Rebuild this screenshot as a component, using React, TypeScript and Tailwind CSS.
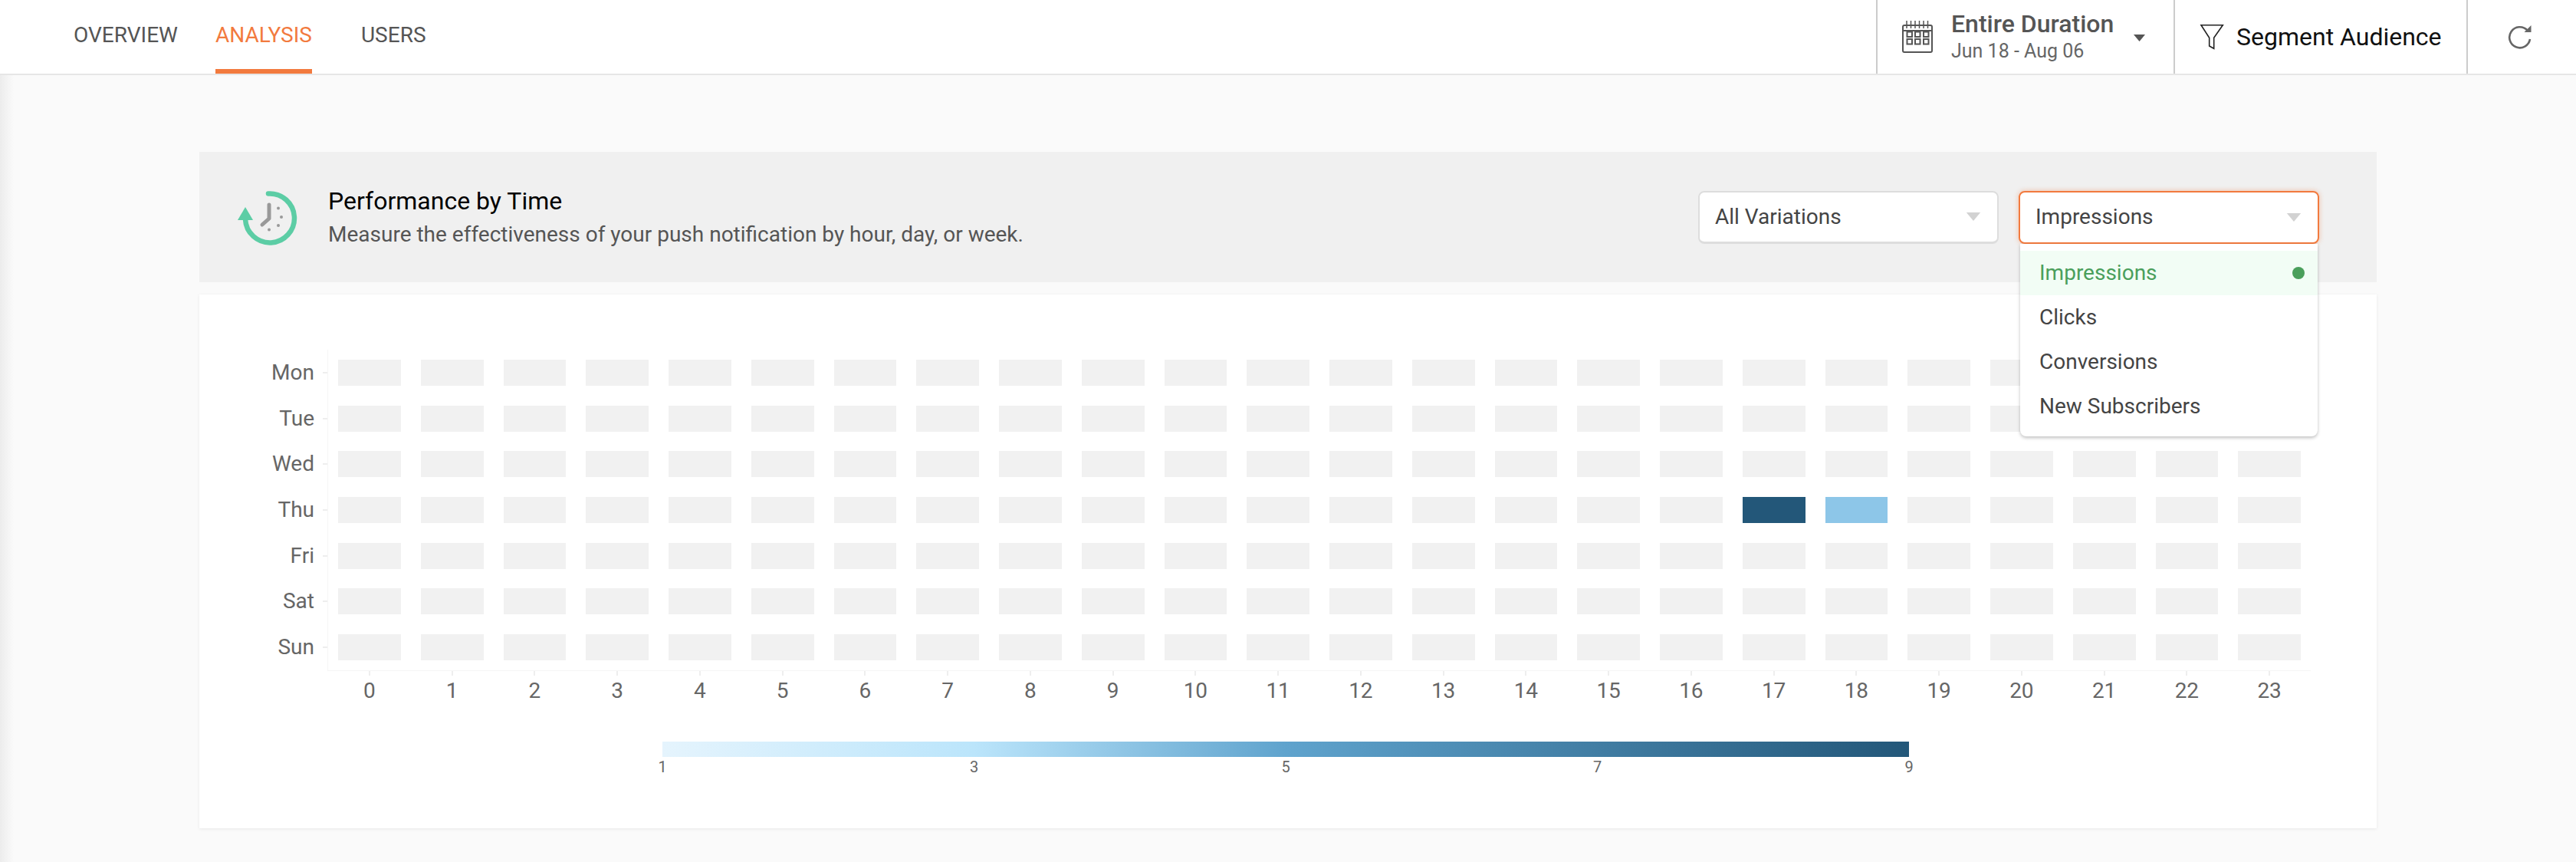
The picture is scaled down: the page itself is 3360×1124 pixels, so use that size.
import React from 'react'

const days = ['Mon', 'Tue', 'Wed', 'Thu', 'Fri', 'Sat', 'Sun']
const hours = Array.from({ length: 24 }, (_, i) => i)
const options = ['Impressions', 'Clicks', 'Conversions', 'New Subscribers']
const legendTicks = [1, 3, 5, 7, 9]

function Caret({ className = '' }: { className?: string }) {
    return (
        <svg viewBox="0 0 20 12" className={className}>
            <polygon points="0,0 20,0 10,12" fill="currentColor" />
        </svg>
    )
}

function CalendarIcon() {
    const rings = [6, 11.5, 17, 22.5, 28, 33.5]
    const cols = [9.5, 20, 31]
    const rows = [17.5, 27]
    return (
        <svg viewBox="0 0 40 42" className="h-[42px] w-[40px]" fill="none" stroke="#555" strokeWidth="2">
            <rect x="1" y="6" width="38" height="35" rx="2" />
            <line x1="1" y1="13" x2="39" y2="13" />
            {rings.map((x) => <line key={x} x1={x} y1="0" x2={x} y2="10" strokeWidth="1.5" />)}
            {rows.map((y) => cols.map((x) => (
                <rect key={`${x}-${y}`} x={x - 3} y={y - 3} width="6.5" height="6.5" />
            )))}
        </svg>
    )
}

function FilterIcon() {
    return (
        <svg viewBox="0 0 32 34" className="h-[34px] w-[32px]" fill="none" stroke="#222" strokeWidth="1.6">
            <path d="M2 1.7H30.3L18.7 18.3V32.3L12.7 29V18.3Z" />
        </svg>
    )
}

function RefreshIcon() {
    return (
        <svg viewBox="0 0 32 32" className="h-[32px] w-[32px]" fill="none">
            <path d="M25.5 7.5A13.5 13.5 0 1 0 29 19" stroke="#666" strokeWidth="2.6" />
            <polygon points="21.5,10 30.5,10 30.5,1" fill="#666" />
        </svg>
    )
}

function TimeIcon() {
    return (
        <svg viewBox="0 0 100 95" className="h-[95px] w-[100px] shrink-0" fill="none">
            <path d="M50 16.5A32 32 0 1 1 20 50" stroke="#5ccda5" strokeWidth="6.5" strokeLinecap="round" />
            <polygon points="10,51 30,51 20,34" fill="#5ccda5" />
            <path d="M51 31V49L42 57" stroke="#999" strokeWidth="5" strokeLinecap="round" strokeLinejoin="round" />
            <circle cx="63" cy="35.5" r="2" fill="#999" />
            <circle cx="67" cy="47" r="2" fill="#999" />
            <circle cx="63" cy="58" r="2" fill="#999" />
            <circle cx="51" cy="63.5" r="2" fill="#999" />
        </svg>
    )
}

export default function App() {
    return (
        <div className="min-h-[1124px] w-[3360px] overflow-hidden bg-[linear-gradient(to_right,#ececec,#fafafa_18px)] font-['Roboto',sans-serif]">
            {/* TOP NAV */}
            <div className="flex h-[98px] items-stretch justify-between border-b-2 border-[#e6e6e6] bg-white">
                <div className="flex items-stretch pl-[96px] text-[28px] text-[#555]">
                    <div className="flex items-center pb-[4px]">OVERVIEW</div>
                    <div className="ml-[49px] flex items-center border-b-[6px] border-[#f27a3e] pt-[2px] text-[#f27a3e]">ANALYSIS</div>
                    <div className="ml-[64px] flex items-center pb-[4px]">USERS</div>
                </div>
                <div className="flex items-stretch">
                    <div className="flex w-[388px] items-center border-l-2 border-[#ccc] pl-[32px]">
                        <CalendarIcon />
                        <div className="ml-[24px] flex flex-col gap-[2px]">
                            <span className="text-[32px] font-medium leading-[36px] text-[#555]">Entire Duration</span>
                            <span className="text-[25px] leading-[32px] text-[#666]">Jun 18 - Aug 06</span>
                        </div>
                        <Caret className="ml-[26px] mt-[2px] h-[11px] w-[15px] text-[#555]" />
                    </div>
                    <div className="flex w-[382px] items-center border-l-2 border-[#ccc] pl-[32px]">
                        <FilterIcon />
                        <span className="ml-[16px] text-[32px] text-[#111]">Segment Audience</span>
                    </div>
                    <div className="flex w-[143px] items-center border-l-2 border-[#ccc] pl-[52px]">
                        <RefreshIcon />
                    </div>
                </div>
            </div>

            <div className="px-[260px] pt-[100px]">
                {/* SECTION HEADER */}
                <div className="flex h-[170px] items-center bg-[#f0f0f0] pl-[40px] pr-[75px]">
                    <TimeIcon />
                    <div className="ml-[28px] flex flex-col gap-[2px]">
                        <span className="text-[32px] leading-[44px] text-black">Performance by Time</span>
                        <span className="text-[28px] leading-[40px] text-[#555]">Measure the effectiveness of your push notification by hour, day, or week.</span>
                    </div>
                    <div className="ml-auto flex gap-[26px]">
                        <div className="flex h-[69px] w-[392px] items-center justify-between rounded-lg border-2 border-b-[3px] border-[#ddd] bg-white pl-[20px] pr-[21px] text-[28px] text-[#444]">
                            All Variations
                            <Caret className="h-[11px] w-[20px] text-[#d2d2d2]" />
                        </div>
                        <div className="relative flex h-[69px] w-[392px] items-center justify-between rounded-lg border-2 border-[#f27a3e] bg-white pl-[20px] pr-[21px] text-[28px] text-[#444] shadow-[0_0_6px_rgba(242,122,62,0.45)]">
                            Impressions
                            <Caret className="h-[11px] w-[20px] text-[#d2d2d2]" />
                            {/* DROPDOWN */}
                            <div className="absolute left-0 top-[calc(100%+2px)] z-10 w-[388px] rounded-b-lg bg-white pb-[10px] pt-[9px] shadow-[0_2px_4px_rgba(0,0,0,0.25)]">
                                {options.map((option, i) => (
                                    <div
                                        key={option}
                                        className={`flex h-[58px] items-center justify-between pl-[25px] pr-[17px] ${i === 0 ? 'bg-[#f2fdf5] text-[#4a9f5b]' : 'text-[#444]'}`}
                                    >
                                        {option}
                                        {i === 0 && <span className="h-[16px] w-[16px] rounded-full bg-[#4a9f5b]" />}
                                    </div>
                                ))}
                            </div>
                        </div>
                    </div>
                </div>

                {/* HEATMAP CARD */}
                <div className="mt-[16px] h-[696px] bg-white pt-[72px] shadow-[0_1px_4px_rgba(0,0,0,0.08)]">
                    <div className="flex">
                        <div className="flex w-[167px] flex-col">
                            {days.map((day) => (
                                <div key={day} className="flex h-[59.7px] items-center justify-end text-[28px] text-[#666]">
                                    {day}
                                    <span className="ml-[11px] h-[2px] w-[6px] bg-[#eee]" />
                                </div>
                            ))}
                        </div>
                        <div className="grid grid-cols-[repeat(24,81.76px)] gap-x-[26px] border-b border-l border-[#f6f6f6] pl-[13px] pr-[13px]">
                            {days.map((day) => hours.map((hour) => (
                                <div key={`${day}-${hour}`} className="flex h-[59.7px] items-center">
                                    <div
                                        className={`h-[34px] w-full ${
                                            day === 'Thu' && hour === 17
                                                ? 'bg-[#235779]'
                                                : day === 'Thu' && hour === 18
                                                    ? 'bg-[#8dc6e8]'
                                                    : 'bg-[#f1f1f1]'
                                        }`}
                                    />
                                </div>
                            )))}
                        </div>
                    </div>

                    {/* X AXIS */}
                    <div className="ml-[181px] grid grid-cols-[repeat(24,81.76px)] gap-x-[26px]">
                        {hours.map((hour) => (
                            <div key={hour} className="flex flex-col items-center text-[28px] leading-[34px] text-[#666]">
                                <span className="h-[6px] w-[2px] bg-[#eee]" />
                                <span className="mt-[3px]">{hour}</span>
                            </div>
                        ))}
                    </div>

                    {/* LEGEND */}
                    <div className="ml-[604px] mt-[49px] w-[1626px]">
                        <div className="h-[20px] bg-[linear-gradient(to_right,#e5f4fd,#bbe5fb_25%,#5fa3cd_50%,#235779)]" />
                        <div className="mt-[1px] flex justify-between text-[20px] leading-[24px] text-[#666]">
                            {legendTicks.map((tick) => (
                                <span key={tick} className="flex w-0 justify-center">{tick}</span>
                            ))}
                        </div>
                    </div>
                </div>
            </div>
        </div>
    )
}
